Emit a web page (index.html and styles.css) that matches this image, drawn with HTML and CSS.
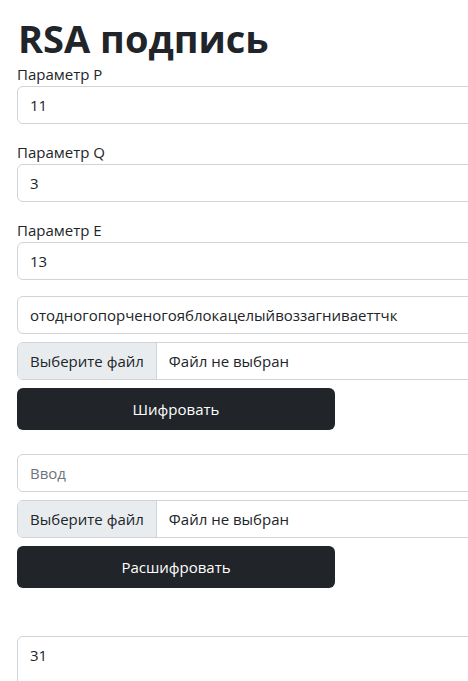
FILE: index.html
```html
<!DOCTYPE html>
<html lang="ru">
<head>
<meta charset="utf-8">
<title>RSA подпись</title>
<link rel="stylesheet" href="styles.css">
</head>
<body>
<main class="page">
  <h1 class="title">RSA подпись</h1>
  <div class="field">
    <label class="label">Параметр P</label>
    <div class="input">11</div>
  </div>
  <div class="field">
    <label class="label">Параметр Q</label>
    <div class="input">3</div>
  </div>
  <div class="field">
    <label class="label">Параметр E</label>
    <div class="input">13</div>
  </div>
  <div class="input gap-sm">отодногопорченогояблокацелыйвоззагниваеттчк</div>
  <div class="file gap-sm"><span class="file-btn">Выберите файл</span><span class="file-name">Файл не выбран</span></div>
  <button class="btn">Шифровать</button>

  <div class="input placeholder gap-sm section">Ввод</div>
  <div class="file gap-sm"><span class="file-btn">Выберите файл</span><span class="file-name">Файл не выбран</span></div>
  <button class="btn">Расшифровать</button>

  <div class="result">31</div>
</main>
</body>
</html>
```
FILE: styles.css
```css
html, body {
  margin: 0;
  padding: 0;
  overflow: hidden;
  background: #fff;
}
body {
  font-family: "Open Sans", "Noto Sans", sans-serif;
  font-size: 15px;
  line-height: 24px;
  color: #212529;
}
.page {
  padding-left: 17px;
  width: 520px;
  display: flex;
  flex-direction: column;
  align-items: flex-start;
}
.title {
  font-size: 38px;
  line-height: 48px;
  font-weight: 700;
  margin: 14px 0 0 1px;
}
.field {
  width: 100%;
  margin-bottom: 16px;
}
.label {
  display: block;
  height: 24px;
}
.input {
  box-sizing: border-box;
  width: 100%;
  height: 38px;
  border: 1px solid #ced4da;
  border-radius: 6px;
  padding: 6px 12px;
}
.placeholder {
  color: #6c757d;
}
.gap-sm {
  margin-bottom: 8px;
}
.section {
  margin-top: 24px;
}
.file {
  box-sizing: border-box;
  width: 100%;
  height: 38px;
  border: 1px solid #ced4da;
  border-radius: 6px;
  display: flex;
  overflow: hidden;
}
.file-btn {
  background: #e9ecef;
  border-right: 1px solid #ced4da;
  padding: 6px 12px;
}
.file-name {
  padding: 6px 12px;
}
.btn {
  box-sizing: border-box;
  width: 318px;
  height: 42px;
  border: 0;
  border-radius: 6px;
  background: #212529;
  color: #fff;
  font-family: inherit;
  font-size: 15px;
}
.result {
  box-sizing: border-box;
  width: 100%;
  height: 80px;
  margin-top: 48px;
  border: 1px solid #ced4da;
  border-radius: 6px;
  padding: 6px 12px;
}
```
